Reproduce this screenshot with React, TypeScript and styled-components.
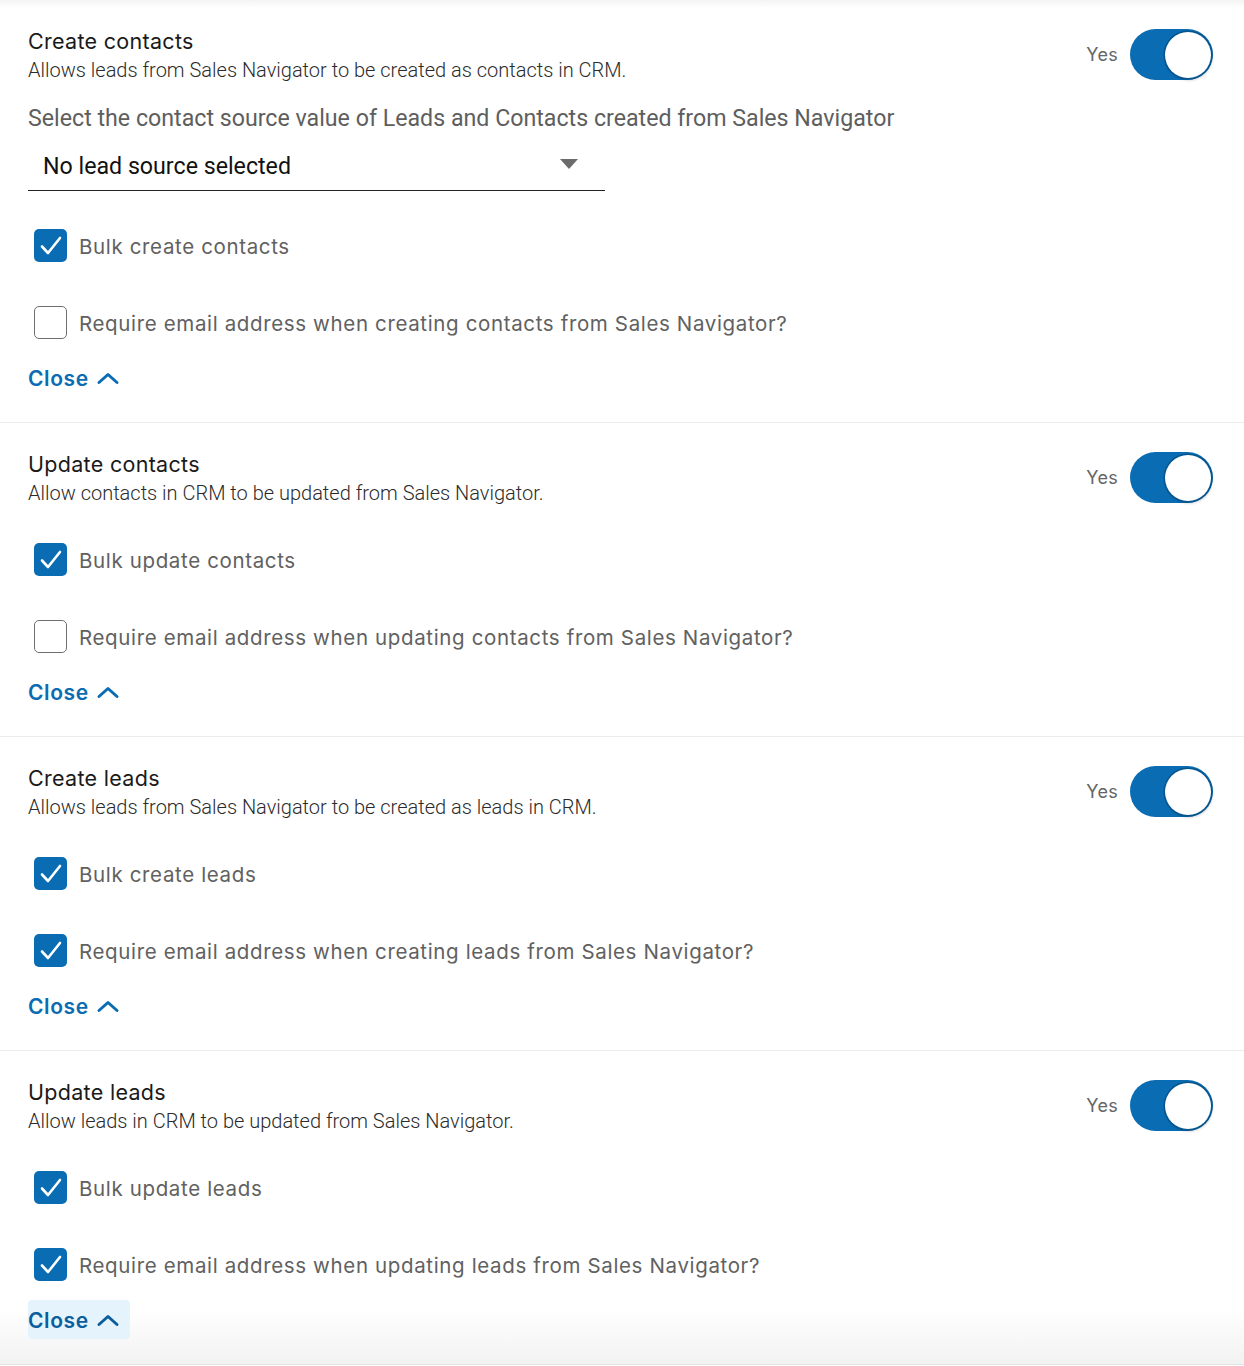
import React from "react";
import styled, { createGlobalStyle } from "styled-components";

const Global = createGlobalStyle`
  html, body { margin: 0; padding: 0; background: #fff; }
  body { font-family: Inter, "Noto Sans", sans-serif; -webkit-font-smoothing: antialiased; }
`;

const BLUE = "#0a6cb2";

const Page = styled.div`
  width: 1244px;
  display: flex;
  flex-direction: column;
`;

const Section = styled.section<{ $first?: boolean; $last?: boolean }>`
  padding: 27px 31px 25px 28px;
  border-bottom: 1px solid ${(p) => (p.$last ? "#e4e4e4" : "#ececec")};
  background: ${(p) =>
    p.$first
      ? "linear-gradient(to bottom, #f4f4f4 0px, #ffffff 8px)"
      : p.$last
      ? "linear-gradient(to bottom, #ffffff calc(100% - 56px), #f2f2f2 100%)"
      : "#ffffff"};
  display: flex;
  flex-direction: column;
`;

const Header = styled.div`
  display: flex;
  justify-content: space-between;
  align-items: flex-start;
`;

const HeaderText = styled.div`
  display: flex;
  flex-direction: column;
`;

const Title = styled.h3`
  margin: 0;
  font-family: Inter, sans-serif;
  font-weight: 400;
  font-size: 21.5px;
  letter-spacing: 0.3px;
  line-height: 28px;
  color: #1a1a1a;
`;

const Desc = styled.p`
  margin: 0;
  font-family: Roboto, sans-serif;
  font-weight: 300;
  font-size: 20px;
  line-height: 30px;
  color: #2b2b2b;
`;

const ToggleWrap = styled.div`
  display: flex;
  align-items: center;
  gap: 12px;
  margin-top: 2px;
`;

const ToggleLabel = styled.span`
  font-family: Inter, sans-serif;
  font-size: 18px;
  letter-spacing: 0.3px;
  color: #666;
`;

const Track = styled.div`
  width: 83px;
  height: 51px;
  border-radius: 26px;
  background: ${BLUE};
  display: flex;
  align-items: center;
  justify-content: flex-end;
  padding: 0 2px;
  box-sizing: border-box;
`;

const Knob = styled.div`
  width: 46px;
  height: 46px;
  border-radius: 50%;
  background: #fff;
  box-shadow: 0 0 0 1.5px #07558d, 1px 2px 3px rgba(0, 0, 0, 0.25);
`;

const SelectLabel = styled.div`
  margin-top: 18px;
  font-family: Roboto, sans-serif;
  font-size: 23.2px;
  line-height: 30px;
  color: #5e5e5e;
`;

const SelectBox = styled.div`
  margin-top: 9px;
  width: 577px;
  height: 49px;
  box-sizing: border-box;
  border-bottom: 1px solid #222;
  display: flex;
  align-items: center;
  justify-content: space-between;
  padding: 0 27px 0 15px;
`;

const SelectValue = styled.span`
  font-family: Roboto, sans-serif;
  font-size: 23.2px;
  color: #111;
`;

const Caret = styled.span`
  width: 0;
  height: 0;
  border-left: 9px solid transparent;
  border-right: 9px solid transparent;
  border-top: 10px solid #6b6b6b;
  margin-top: -4px;
`;

const Options = styled.div<{ $afterSelect?: boolean }>`
  margin-top: ${(p) => (p.$afterSelect ? "38px" : "35px")};
  display: flex;
  flex-direction: column;
  gap: 44px;
`;

const CheckRow = styled.label`
  display: flex;
  align-items: center;
  gap: 12px;
  height: 33px;
  padding-left: 6px;
`;

const Box = styled.span<{ $checked: boolean }>`
  width: 33px;
  height: 33px;
  box-sizing: border-box;
  border-radius: 5px;
  background: ${(p) => (p.$checked ? BLUE : "#fff")};
  border: ${(p) => (p.$checked ? "none" : "1.5px solid #6f6f6f")};
  display: flex;
  align-items: center;
  justify-content: center;
`;

const CheckLabel = styled.span`
  font-family: Inter, sans-serif;
  font-size: 20.5px;
  letter-spacing: 0.64px;
  color: #616161;
  padding-top: 2px;
`;

const CloseButton = styled.button<{ $active?: boolean }>`
  margin-top: 19px;
  align-self: flex-start;
  height: 39px;
  display: flex;
  align-items: center;
  gap: 7px;
  padding: 1px 10px 0 0;
  border: none;
  border-radius: 4px;
  background: ${(p) => (p.$active ? "#e4f3fc" : "transparent")};
  font-family: Inter, sans-serif;
  font-weight: 600;
  font-size: 21px;
  letter-spacing: 0.6px;
  color: ${(p) => (p.$active ? "#0b5e9c" : BLUE)};
  cursor: pointer;
`;

const Check = () => (
  <svg width="26" height="26" viewBox="0 0 26 26">
    <path d="M4 13.5 L10 20 L22 5" fill="none" stroke="#fff" strokeWidth="2.6" strokeLinecap="round" strokeLinejoin="round" />
  </svg>
);

const Chevron = () => (
  <svg width="24" height="24" viewBox="0 0 24 24">
    <path d="M3 16.5 L12 8.5 L21 16.5" fill="none" stroke="currentColor" strokeWidth="3" strokeLinecap="round" strokeLinejoin="round" />
  </svg>
);

type Opt = { label: string; checked: boolean };
type Sec = { title: string; desc: string; select?: boolean; options: Opt[] };

const sections: Sec[] = [
  {
    title: "Create contacts",
    desc: "Allows leads from Sales Navigator to be created as contacts in CRM.",
    select: true,
    options: [
      { label: "Bulk create contacts", checked: true },
      { label: "Require email address when creating contacts from Sales Navigator?", checked: false },
    ],
  },
  {
    title: "Update contacts",
    desc: "Allow contacts in CRM to be updated from Sales Navigator.",
    options: [
      { label: "Bulk update contacts", checked: true },
      { label: "Require email address when updating contacts from Sales Navigator?", checked: false },
    ],
  },
  {
    title: "Create leads",
    desc: "Allows leads from Sales Navigator to be created as leads in CRM.",
    options: [
      { label: "Bulk create leads", checked: true },
      { label: "Require email address when creating leads from Sales Navigator?", checked: true },
    ],
  },
  {
    title: "Update leads",
    desc: "Allow leads in CRM to be updated from Sales Navigator.",
    options: [
      { label: "Bulk update leads", checked: true },
      { label: "Require email address when updating leads from Sales Navigator?", checked: true },
    ],
  },
];

export default function App() {
  return (
    <Page>
      <Global />
      {sections.map((s, i) => (
        <Section key={s.title} $first={i === 0} $last={i === sections.length - 1}>
          <Header>
            <HeaderText>
              <Title>{s.title}</Title>
              <Desc>{s.desc}</Desc>
            </HeaderText>
            <ToggleWrap>
              <ToggleLabel>Yes</ToggleLabel>
              <Track>
                <Knob />
              </Track>
            </ToggleWrap>
          </Header>
          {s.select && (
            <>
              <SelectLabel>Select the contact source value of Leads and Contacts created from Sales Navigator</SelectLabel>
              <SelectBox>
                <SelectValue>No lead source selected</SelectValue>
                <Caret />
              </SelectBox>
            </>
          )}
          <Options $afterSelect={s.select}>
            {s.options.map((o) => (
              <CheckRow key={o.label}>
                <Box $checked={o.checked}>{o.checked && <Check />}</Box>
                <CheckLabel>{o.label}</CheckLabel>
              </CheckRow>
            ))}
          </Options>
          <CloseButton $active={i === sections.length - 1}>
            Close
            <Chevron />
          </CloseButton>
        </Section>
      ))}
    </Page>
  );
}
